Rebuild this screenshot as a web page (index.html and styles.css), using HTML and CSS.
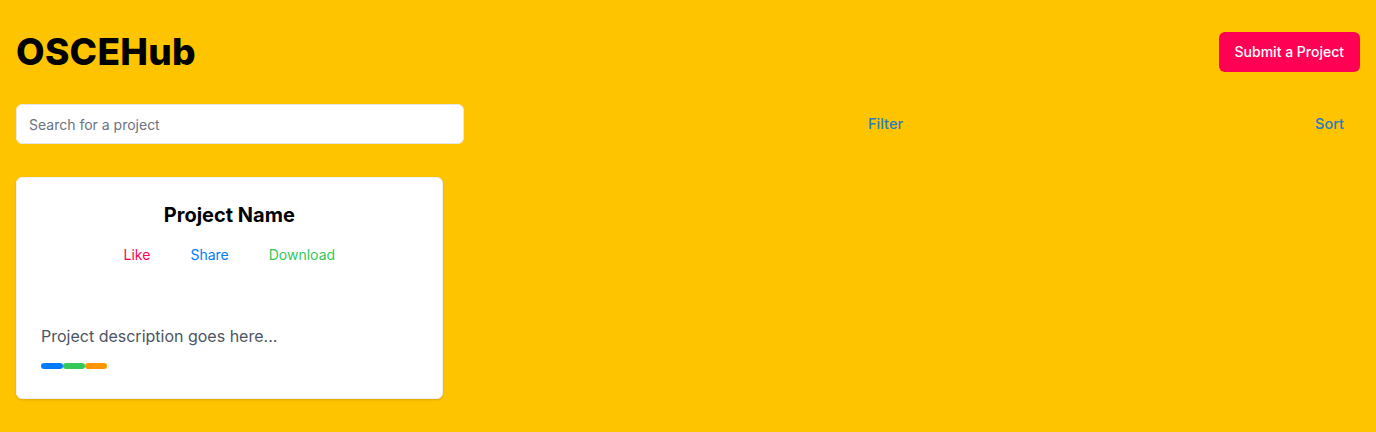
FILE: index.html
```html
<!DOCTYPE html>
<html lang="en">
<head>
<meta charset="utf-8">
<title>OSCEHub</title>
<link rel="stylesheet" href="styles.css">
</head>
<body>
<div class="page">
  <header class="header">
    <h1 class="logo">OSCEHub</h1>
    <button class="submit-btn">Submit a Project</button>
  </header>
  <div class="toolbar">
    <input class="search" type="text" placeholder="Search for a project">
    <button class="tool-btn filter">Filter</button>
    <button class="tool-btn">Sort</button>
  </div>
  <div class="grid">
    <div class="card">
      <h2 class="card-title">Project Name</h2>
      <div class="actions">
        <button class="action like">Like</button>
        <button class="action share">Share</button>
        <button class="action download">Download</button>
      </div>
      <p class="desc">Project description goes here...</p>
      <div class="tags">
        <span class="tag tag-blue"></span>
        <span class="tag tag-green"></span>
        <span class="tag tag-orange"></span>
      </div>
    </div>
  </div>
</div>
</body>
</html>
```

FILE: styles.css
```css
* { box-sizing: border-box; }
html, body { margin: 0; padding: 0; }
body {
  background: #ffc400;
  font-family: Inter, "Noto Sans", sans-serif;
  height: 432px;
  overflow: hidden;
}
.page { padding: 32px 16px 16px; }
.header {
  display: flex;
  justify-content: space-between;
  align-items: center;
  height: 40px;
}
.logo {
  margin: 0;
  font-size: 37px;
  line-height: 40px;
  font-weight: 800;
  letter-spacing: 0.3px;
  color: #000;
}
.submit-btn {
  font-family: inherit;
  font-size: 14px;
  line-height: 24px;
  padding: 8px 16px;
  background: #ff0055;
  color: #fff;
  border: none;
  border-radius: 6px;
  font-weight: 500;
}
.toolbar {
  margin-top: 32px;
  display: flex;
  justify-content: space-between;
  align-items: center;
}
.search {
  width: 448px;
  height: 40px;
  border: 1px solid #e5e7eb;
  border-radius: 6px;
  padding: 0 12px;
  font-family: inherit;
  font-size: 14px;
  background: #fff;
  color: #111;
  outline: none;
}
.search::placeholder { color: #6b7280; }
.tool-btn {
  font-family: inherit;
  font-size: 14.5px;
  line-height: 24px;
  padding: 8px 16px;
  background: transparent;
  border: none;
  color: #2a7bc2;
  font-weight: 500;
}
.filter { margin-left: 8px; }
.grid {
  margin-top: 33px;
  display: grid;
  grid-template-columns: repeat(3, 1fr);
  gap: 32px;
}
.card {
  background: #fff;
  border: 1px solid #f1f1f1;
  border-radius: 6px;
  padding: 23px 24px 30px;
  box-shadow: 0 1px 3px rgba(0,0,0,0.1), 0 1px 2px rgba(0,0,0,0.06);
  height: 222px;
}
.card-title {
  margin: 0;
  text-align: center;
  font-size: 20px;
  line-height: 28px;
  font-weight: 700;
  color: #000;
}
.actions {
  margin-top: 16px;
  display: flex;
  justify-content: center;
  gap: 40px;
}
.action {
  font-family: inherit;
  font-size: 14px;
  line-height: 20px;
  padding: 0;
  background: none;
  border: none;
}
.like { color: #ff0055; }
.share { color: #007aff; }
.download { color: #34c759; }
.desc {
  margin: 57px 0 0;
  font-size: 16px;
  line-height: 28px;
  color: #4b5563;
}
.tags {
  margin-top: 13px;
  display: flex;
}
.tag {
  width: 22px;
  height: 6px;
  border-radius: 3px;
}
.tag-blue { background: #007aff; }
.tag-green { background: #34c759; }
.tag-orange { background: #ff9500; }
```
